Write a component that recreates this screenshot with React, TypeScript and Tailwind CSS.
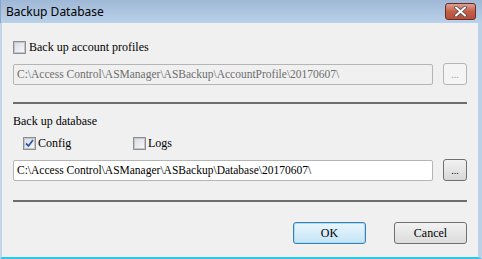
const serif = { fontFamily: '"Liberation Serif", "Noto Sans CJK TC", serif' };

const CheckBox = ({ checked }: { checked?: boolean }) => (
  <span className="flex h-[13px] w-[13px] items-center justify-center border border-[#8e8f8f] bg-white">
    <span className="flex h-[11px] w-[11px] items-center justify-center border border-[#c2c6cc] bg-gradient-to-br from-[#d9dde3] to-[#f6f7f8]">
      {checked && (
        <svg width="9" height="9" viewBox="0 0 9 9">
          <path d="M1 4.5 L3.5 7 L8 1" fill="none" stroke="#2c5aa8" strokeWidth="1.8" />
        </svg>
      )}
    </span>
  </span>
);

const PathBox = ({ value, disabled }: { value: string; disabled?: boolean }) => (
  <div className="flex flex-1 items-center gap-[10px]">
    <div
      className={`flex h-[21px] flex-1 items-center rounded-[2px] border px-[3px] text-[11.5px] ${
        disabled ? 'border-[#b5b5b5] bg-[#f0f0f0] text-[#6d6d6d]' : 'border-[#b5b5b5] bg-white text-black'
      }`}
      style={serif}
    >
      {value}
    </div>
    <button
      className={`flex h-[22px] w-[24px] items-end justify-center rounded-[3px] border pb-[4px] text-[10px] leading-none ${
        disabled ? 'border-[#b5b5b5] bg-[#f4f4f4] text-[#9a9a9a]' : 'border-[#707070] bg-gradient-to-b from-[#f2f2f2] to-[#d8d8d8] text-black'
      }`}
    >
      ...
    </button>
  </div>
);

export default function App() {
  return (
    <div className="flex h-[259px] w-[482px] flex-col bg-[#f0f0f0]">
      <div className="flex h-[23px] shrink-0 items-center justify-between border-l border-[#8aa5c6] bg-gradient-to-b from-[#9fb8d6] to-[#bad1ea] pl-[5px] pr-[6px]">
        <span className="text-[12px] text-black" style={{ fontFamily: '"Noto Sans", sans-serif' }}>
          Backup Database
        </span>
        <div className="flex h-[17px] w-[31px] items-center justify-center rounded-[3px] border border-[#6b2a22] bg-gradient-to-b from-[#e0a08f] via-[#c45e48] to-[#b44f39]">
          <svg width="13" height="11" viewBox="0 0 13 11">
            <path d="M2 1.5 L11 9.5 M11 1.5 L2 9.5" stroke="#4a4a4a" strokeWidth="3.6" strokeLinecap="round" />
            <path d="M2 1.5 L11 9.5 M11 1.5 L2 9.5" stroke="#ffffff" strokeWidth="2" strokeLinecap="round" />
          </svg>
        </div>
      </div>
      <div className="flex flex-1 flex-col border-b-2 border-l-2 border-r-4 border-b-[#2ac6ec] border-l-[#c3d5e9] border-r-[#bcd0e6] px-[11px] text-[12px] leading-[14px] text-black" style={serif}>
        <div className="mt-[17px] flex h-[14px] items-center gap-[3px]">
          <CheckBox />
          <span>Back up account profiles</span>
        </div>
        <div className="mt-[9px] flex">
          <PathBox value="C:\Access Control\ASManager\ASBackup\AccountProfile\20170607\" disabled />
        </div>
        <div className="mt-[17px] h-[2px] bg-[#6d6d6d]" />
        <div className="mt-[10px] h-[14px]">Back up database</div>
        <div className="mt-[8px] flex h-[14px] items-center">
          <div className="ml-[10px] flex w-[110px] items-center gap-[2px]">
            <CheckBox checked />
            <span>Config</span>
          </div>
          <div className="flex items-center gap-[2px]">
            <CheckBox />
            <span>Logs</span>
          </div>
        </div>
        <div className="mt-[9px] flex">
          <PathBox value="C:\Access Control\ASManager\ASBackup\Database\20170607\" />
        </div>
        <div className="mt-[19px] h-[2px] bg-[#6d6d6d]" />
        <div className="mt-[20px] flex justify-end gap-[28px]">
          <button className="h-[22px] w-[73px] rounded-[3px] border border-[#3c7fb1] bg-gradient-to-b from-[#eaf6fd] to-[#c4e5f6] text-[12px] shadow-[inset_0_0_0_1px_#a6dcf5]" style={serif}>
            OK
          </button>
          <button className="h-[22px] w-[73px] rounded-[3px] border border-[#707070] bg-gradient-to-b from-[#f2f2f2] to-[#dcdcdc] text-[12px]" style={serif}>
            Cancel
          </button>
        </div>
      </div>
    </div>
  );
}
